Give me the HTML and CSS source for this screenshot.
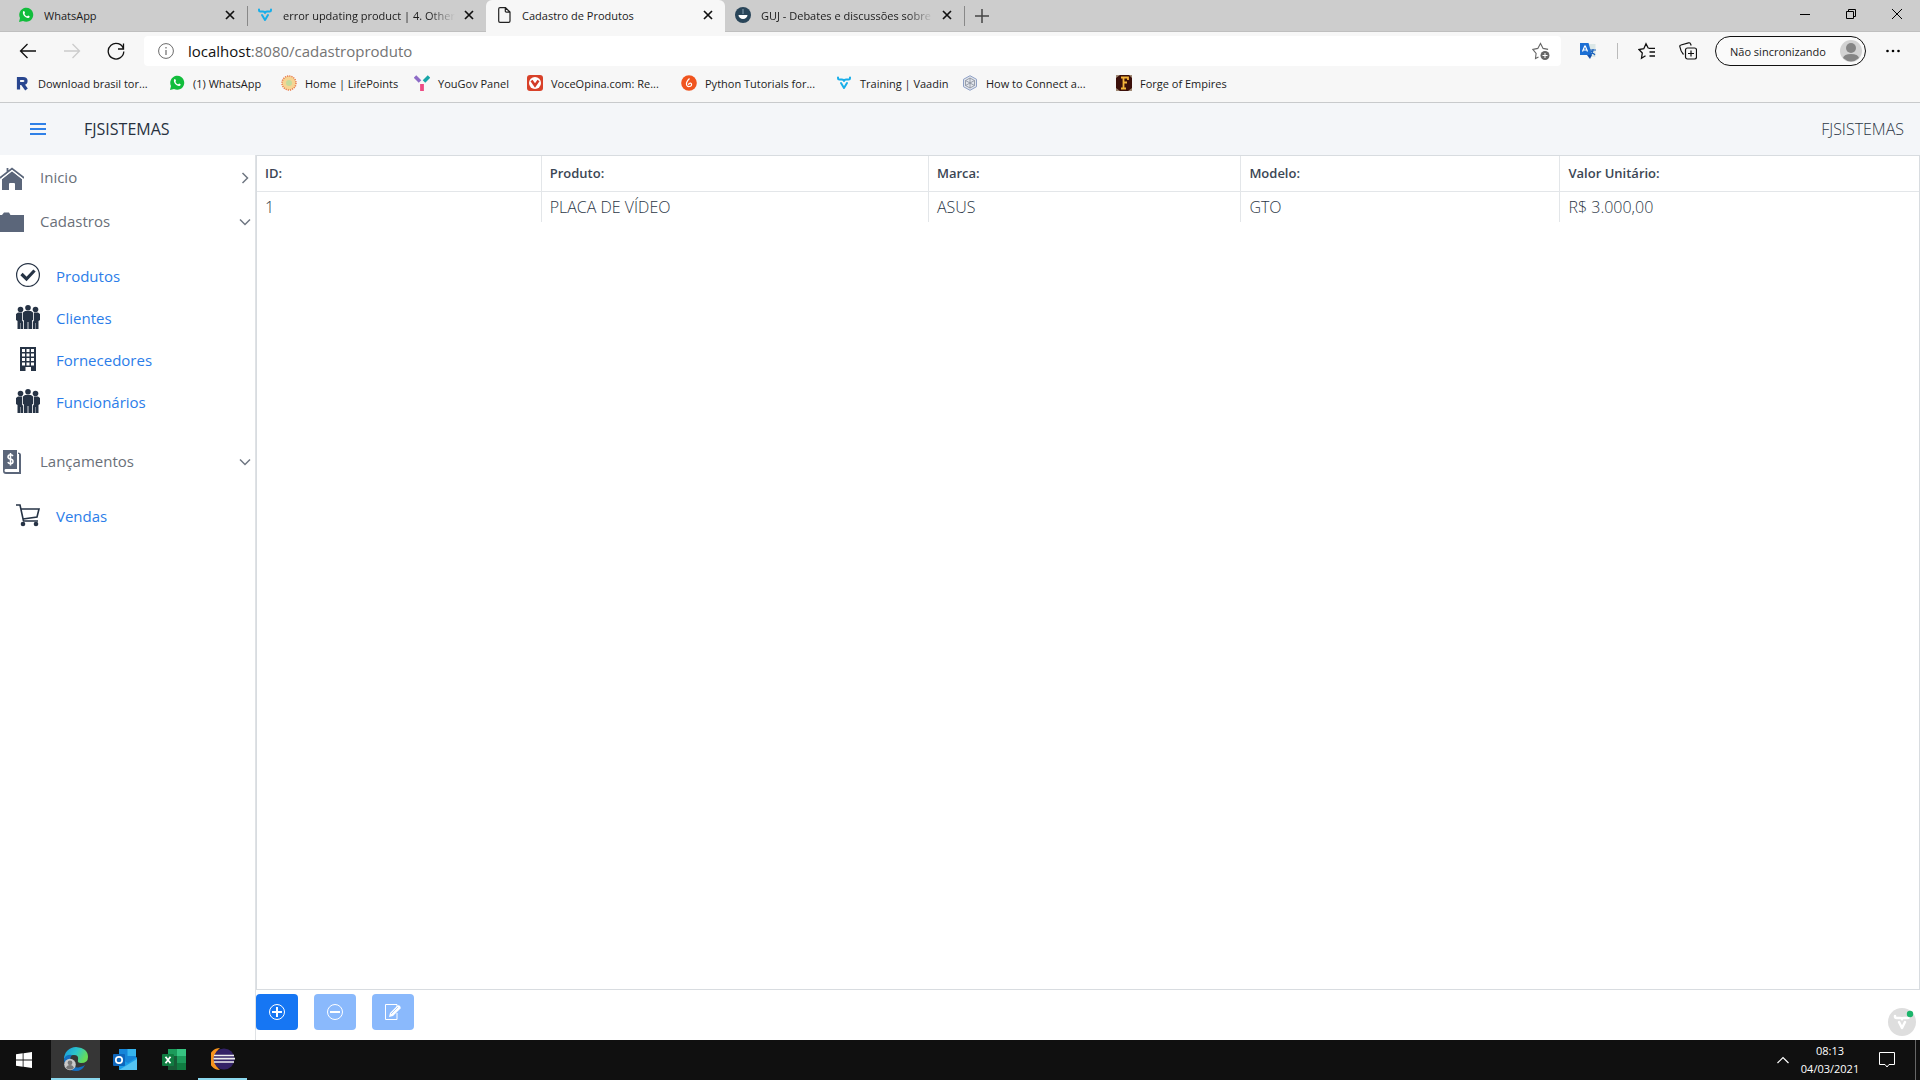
FILE: index.html
```html
<!DOCTYPE html>
<html lang="pt-BR">
<head>
<meta charset="utf-8">
<title>Cadastro de Produtos</title>
<link rel="stylesheet" href="styles.css">
</head>
<body>
<svg class="defs" aria-hidden="true">
  <symbol id="close" viewBox="0 0 16 16"><path d="M4 4l8 8M12 4l-8 8" stroke="#111" stroke-width="1.7" fill="none"/></symbol>
  <symbol id="whatsapp" viewBox="0 0 16 16"><path d="M1 15l1-4A7 7 0 1 1 5 14z" fill="#12bd3c"/><path d="M5.3 4.3c.6-.4 1-.2 1.200.3l.5 1.200c.1.4-.5.8-.5 1.100.5 1 1.400 1.900 2.500 2.400.4 0 .8-.9 1.200-.8l1.300.7c.4.3 0 1.300-.6 1.600-2.600 1.200-7.500-3.300-5.600-6.500z" fill="#fff"/></symbol>
  <symbol id="vaadin" viewBox="0 0 16 16"><path d="M2 2.500v.8q0 1.200 1.300 1.200h2.500q2.200 0 2.200 1.500 0-1.500 2.200-1.500h2.500q1.300 0 1.300-1.200v-.8M5 8l3 5 3-5" fill="none" stroke="currentColor" stroke-width="2" stroke-linecap="round" stroke-linejoin="round"/></symbol>
  <symbol id="people" viewBox="0 0 24 24"><circle cx="12" cy="2.800" r="2.800"/><circle cx="4.500" cy="4.500" r="2.800"/><circle cx="19.500" cy="4.500" r="2.800"/><path d="M9 6h6l2 1.500V15l-1 .5V24h-3.600v-7h-.8v7H8v-8.500L7 15V7.500zM2 7.500h4.200V16l1 .5V24H4.700v-6h-.4v6H1.500v-8L0 15V9zM22 7.500h-4.200V16l-1 .5V24h2.500v-6h.4v6h2.800v-8l1.500-1V9z"/></symbol>
  <symbol id="chevron" viewBox="0 0 12 12"><path d="M1 3.500l5 5 5-5" fill="none" stroke="#6f7782" stroke-width="1.500"/></symbol>
</svg>

<header class="browser">
  <div class="tabstrip">
    <div class="tab">
      <svg class="i16"><use href="#whatsapp"/></svg>
      <span class="tab-title">WhatsApp</span>
      <button class="bare" aria-label="Fechar"><svg class="i16"><use href="#close"/></svg></button>
    </div>
    <div class="tab divided">
      <svg class="i16 cyan"><use href="#vaadin"/></svg>
      <span class="tab-title fade">error updating product | 4. Other</span>
      <button class="bare" aria-label="Fechar"><svg class="i16"><use href="#close"/></svg></button>
    </div>
    <div class="tab active">
      <svg class="i16" viewBox="0 0 16 16"><path d="M4 .7h5.500L14 5v9q0 1.300-1.300 1.300H4Q2.700 15.300 2.700 14V2Q2.700.7 4 .7zM9.300.7V4q0 1.200 1.200 1.200H14" fill="none" stroke="#222" stroke-width="1.200"/></svg>
      <span class="tab-title">Cadastro de Produtos</span>
      <button class="bare" aria-label="Fechar"><svg class="i16"><use href="#close"/></svg></button>
    </div>
    <div class="tab">
      <svg class="i16" viewBox="0 0 16 16"><circle cx="8" cy="8" r="8" fill="#294559"/><path d="M3.500 8h9a4.500 4 0 0 1-9 0z" fill="#fff"/><path d="M8 2v5" stroke="#577184" stroke-width="2"/></svg>
      <span class="tab-title fade">GUJ - Debates e discussões sobre</span>
      <button class="bare" aria-label="Fechar"><svg class="i16"><use href="#close"/></svg></button>
    </div>
    <button class="bare newtab" aria-label="Nova guia"><svg class="i16" viewBox="0 0 16 16"><path d="M8 1v14M1 8h14" stroke="#444" stroke-width="1.500"/></svg></button>
    <div class="window-controls">
      <button class="bare" aria-label="Minimizar"><svg class="i12" viewBox="0 0 12 12"><path d="M1 6.500h10" stroke="#000"/></svg></button>
      <button class="bare" aria-label="Restaurar"><svg class="i12" viewBox="0 0 12 12"><path d="M1.500 3.500h7v7h-7zM3.500 3.500v-2h7v7h-2" fill="none" stroke="#000"/></svg></button>
      <button class="bare" aria-label="Fechar janela"><svg class="i12" viewBox="0 0 12 12"><path d="M1 1l10 10M11 1L1 11" stroke="#000"/></svg></button>
    </div>
  </div>

  <div class="toolbar">
    <button class="bare nav" aria-label="Voltar"><svg class="i18" viewBox="0 0 18 18"><path d="M17 9H1.500M8.500 2l-7 7 7 7" fill="none" stroke="#111" stroke-width="1.300"/></svg></button>
    <button class="bare nav" aria-label="Avançar" disabled><svg class="i18" viewBox="0 0 18 18"><path d="M1 9h15.500M9.500 2l7 7-7 7" fill="none" stroke="#ccc" stroke-width="1.300"/></svg></button>
    <button class="bare nav" aria-label="Atualizar"><svg class="i18" viewBox="0 0 18 18"><path d="M16.500 7A7.800 7.800 0 1 0 16.800 9.500M16.500 1.500V7H11" fill="none" stroke="#111" stroke-width="1.300"/></svg></button>
    <div class="address">
      <svg class="i16" viewBox="0 0 16 16"><circle cx="8" cy="8" r="7.400" fill="none" stroke="#6b6b6b"/><path d="M8 7v5M8 4v1.500" stroke="#6b6b6b" stroke-width="1.200"/></svg>
      <span class="url"><b>localhost</b>:8080/cadastroproduto</span>
      <button class="bare" aria-label="Adicionar aos favoritos"><svg class="i18" viewBox="0 0 18 18"><path d="M6.500 15L3.500 16.500l.6-5.200L.8 7.400l5-1L8.500 1.500l2.600 4.900 5 1" fill="none" stroke="#666" stroke-width="1.100"/><circle cx="13" cy="13.500" r="4.500" fill="#666"/><path d="M13 11v5M10.500 13.500h5" stroke="#fff"/></svg></button>
    </div>
    <div class="tools">
      <button class="bare" aria-label="Traduzir"><svg class="i18" viewBox="0 0 18 18"><path d="M10 2h6.500v13H11z" fill="#dbe7e7"/><path d="M1 1h8.500l3.500 12H1z" fill="#1c6fd4"/><path d="M8 13h5l-2 4z" fill="#1750a8"/><path d="M3.500 9.500L5.700 4h.6l2.200 5.500M4.500 8h3" stroke="#fff" stroke-width="1.200" fill="none"/><path d="M11 8h6M14 7v1q0 3-3 5M12 9l4 4" stroke="#1d62bd" stroke-width="1.200" fill="none"/></svg></button>
      <span class="rule"></span>
      <button class="bare" aria-label="Favoritos"><svg class="i18" viewBox="0 0 18 18"><path d="M10.500 6.300h6.500M11.500 10h5.500M11.500 14H17M7.500 13.700l-4 2.500.8-5.200L1 7.500l4.800-.8L8 1.800l2.300 4.500" fill="none" stroke="#111" stroke-width="1.300"/></svg></button>
      <button class="bare" aria-label="Coleções"><svg class="i18" viewBox="0 0 18 18"><rect x="6.500" y="6" width="11" height="11" rx="2" fill="none" stroke="#111" stroke-width="1.200"/><path d="M12 8.500v6M9 11.500h6M4.500 12.500Q1.500 9 .8 4.500 .6 3.300 2 3l7.500-2.200q1.500-.3 2 1l.7 1.700" fill="none" stroke="#111" stroke-width="1.200"/></svg></button>
    </div>
    <button class="profile">Não sincronizando
      <svg class="avatar" viewBox="0 0 22 22"><circle cx="11" cy="11" r="11" fill="#d2d2d2"/><circle cx="11" cy="8" r="5" fill="#858585"/><path d="M3 18q1-4 8-4t8 4q-8 7-16 0z" fill="#858585"/></svg>
    </button>
    <button class="bare more" aria-label="Mais"><svg class="i16" viewBox="0 0 16 16"><circle cx="2.500" cy="8" r="1.300"/><circle cx="8" cy="8" r="1.300"/><circle cx="13.500" cy="8" r="1.300"/></svg></button>
  </div>

  <nav class="bookmarks">
    <a href="#"><svg class="i16" viewBox="0 0 16 16"><path d="M4.500 14.500V3.500H9q3 0 3 2.500T9 8.500H5M8.500 9l4 5.500" fill="none" stroke="#29468f" stroke-width="3.200"/></svg>Download brasil tor...</a>
    <a href="#"><svg class="i16"><use href="#whatsapp"/></svg>(1) WhatsApp</a>
    <a href="#"><svg class="i16" viewBox="0 0 16 16"><circle cx="8" cy="8" r="7" fill="#f6d493" stroke="#e97849" stroke-width="1.500" stroke-dasharray="1.200 1"/><circle cx="8" cy="8" r="3" fill="#c4db9d"/></svg>Home | LifePoints</a>
    <a href="#"><svg class="i16" viewBox="0 0 16 16"><path d="M1 1.500l5 5" stroke="#8d6bc6" stroke-width="3.500"/><path d="M15 1.500l-5 5" stroke="#17a5a7" stroke-width="3.500"/><path d="M8 9v7" stroke="#ed4b83" stroke-width="3.800"/></svg>YouGov Panel</a>
    <a href="#"><svg class="i16" viewBox="0 0 16 16"><rect width="16" height="16" rx="3" fill="#d84129"/><circle cx="8" cy="8" r="6" fill="#fff"/><path d="M4.500 5.500L8 10.500l3.500-5" fill="none" stroke="#d33a27" stroke-width="2.500"/></svg>VoceOpina.com: Re...</a>
    <a href="#"><svg class="i16" viewBox="0 0 16 16"><circle cx="8" cy="8" r="7.800" fill="#f0541e"/><path d="M8.500 3.500Q5 7 5.500 9.500 6 12 8.500 11.500 11 11 10.500 9q-.7-1.500-2.300-.6Q7.200 9.500 8.200 9.800" fill="none" stroke="#fff" stroke-width="1.200"/></svg>Python Tutorials for...</a>
    <a href="#"><svg class="i16 cyan"><use href="#vaadin"/></svg>Training | Vaadin</a>
    <a href="#"><svg class="i16" viewBox="0 0 16 16"><path d="M8 .7l6.500 3.600v7.400L8 15.300l-6.500-3.600V4.300z" fill="#e3e6ec" stroke="#8d9fc5"/><path d="M8 3l4.500 2.500v5L8 13l-4.500-2.500v-5zM8 3v10M3.500 5.500l9 5M12.500 5.500l-9 5" fill="none" stroke="#858d9c" stroke-width=".8"/></svg>How to Connect a...</a>
    <a href="#"><svg class="i16" viewBox="0 0 16 16"><rect width="16" height="16" fill="#3c100b"/><path d="M0 0h4L0 3zM16 0v3l-3-3zM0 16v-3l4 3zM16 16v-3l-4 3z" fill="#a08a76"/><path d="M5 2.500h7V5M7.500 2.500v11M5 13.500h5M7.500 7.500h3.500" fill="none" stroke="#f5b53a" stroke-width="1.800"/></svg>Forge of Empires</a>
  </nav>
</header>

<div class="app">
  <header class="navbar">
    <button class="bare menu" aria-label="Menu"><svg class="i16" viewBox="0 0 16 16"><path d="M0 3h16M0 8h16M0 13h16" stroke="#2f80e7" stroke-width="2"/></svg></button>
    <h1>FJSISTEMAS</h1>
    <span class="company">FJSISTEMAS</span>
  </header>
  <div class="content">
    <aside class="drawer">
      <details>
        <summary><svg class="i24" viewBox="0 0 24 24"><path d="M12 5L22 13v11h-7v-6q0-1-1-1h-4q-1 0-1 1v6H2V13z"/><path d="M0 11.500L12 2.200l12 9.300M7.500 1.500V6" transform="translate(0 .5)" fill="none" stroke="currentColor" stroke-width="1.800"/><path d="M1.500 12.700L12 4.600l10.500 8.100" fill="none" stroke="#fff" stroke-width="1.200"/></svg>Inicio<svg class="i12 arrow"><use href="#chevron"/></svg></summary>
      </details>
      <details open>
        <summary><svg class="i24" viewBox="0 0 24 24"><path d="M0 5h2l2-2.500h5L10.500 5H24v17H0z"/></svg>Cadastros<svg class="i12 arrow"><use href="#chevron"/></svg></summary>
        <ul>
          <li><a href="#"><svg class="i24" viewBox="0 0 24 24"><circle cx="12" cy="12" r="11.400" fill="none" stroke="currentColor" stroke-width="1.200"/><path d="M5.500 11l5 5 8-8.500" fill="none" stroke="currentColor" stroke-width="3.200"/></svg>Produtos</a></li>
          <li><a href="#"><svg class="i24"><use href="#people"/></svg>Clientes</a></li>
          <li><a href="#"><svg class="i24" viewBox="0 0 24 24"><path fill-rule="evenodd" d="M4 0h16v24h-5v-4H9.500v4H4zM6 2v3h3V2zm4.500 0v3h3V2zM15 2v3h3V2zM6 6.500v3h3v-3zm4.500 0v3h3v-3zm4.500 0v3h3v-3zM6 11v3h3v-3zm4.500 0v3h3v-3zm4.500 0v3h3v-3zM6 15.500v3h3v-3zm4.500 0v3h3v-3zm4.500 0v3h3v-3z"/></svg>Fornecedores</a></li>
          <li><a href="#"><svg class="i24"><use href="#people"/></svg>Funcionários</a></li>
        </ul>
      </details>
      <details open>
        <summary><svg class="i24" viewBox="0 0 24 24"><path d="M3 0h14v19H5.500q-1 0-1 1.500T6 22h13V4h-1V2.500q3 0 3 2.500v19H6q-3 0-3-3z"/><path d="M13 6Q12 4.800 10.500 4.800 8 4.800 8 7q0 1.600 2.500 2T13 11.500q0 2.200-2.500 2.200Q9 13.700 7.700 12.300M10.500 3v12.500" fill="none" stroke="#fff" stroke-width="1.500"/></svg>Lançamentos<svg class="i12 arrow"><use href="#chevron"/></svg></summary>
        <ul>
          <li><a href="#"><svg class="i24" viewBox="0 0 24 24"><path d="M0 2h4l3.500 16M5 6h18l-2 8-14 2M7 18h15" fill="none" stroke="currentColor" stroke-width="1.600"/><circle cx="7" cy="21" r="2.300"/><circle cx="20" cy="21" r="2.300"/></svg>Vendas</a></li>
        </ul>
      </details>
    </aside>
    <main>
      <div class="grid">
        <table>
          <colgroup><col class="c-id"><col class="c-product"><col class="c-brand"><col class="c-model"><col></colgroup>
          <thead><tr><th>ID:</th><th>Produto:</th><th>Marca:</th><th>Modelo:</th><th>Valor Unitário:</th></tr></thead>
          <tbody><tr><td>1</td><td>PLACA DE VÍDEO</td><td>ASUS</td><td>GTO</td><td>R$ 3.000,00</td></tr></tbody>
        </table>
      </div>
      <div class="actions">
        <button class="primary" aria-label="Adicionar"><svg class="i16" viewBox="0 0 16 16"><circle cx="8" cy="8" r="7.500" fill="none" stroke="#fff"/><path d="M8 3v10M3 8h10" stroke="#fff" stroke-width="2"/></svg></button>
        <button class="primary" aria-label="Remover" disabled><svg class="i16" viewBox="0 0 16 16"><circle cx="8" cy="8" r="7.500" fill="none" stroke="#fff"/><path d="M3 8h10" stroke="#fff" stroke-width="2"/></svg></button>
        <button class="primary" aria-label="Editar" disabled><svg class="i16" viewBox="0 0 16 16"><path d="M12 9v6.500H.5V.5H12V3" fill="none" stroke="#fff"/><path d="M4 13l1-4 7.500-7.500Q14 .8 15 2t.5 2.500L8 12z" fill="#fff"/><path d="M6 10l7-7" stroke="#8ab9fc" stroke-width=".7"/></svg></button>
      </div>
    </main>
    <button class="bare devtool" aria-label="Vaadin"><svg class="i28" viewBox="0 0 28 28"><circle cx="14" cy="14" r="14" fill="#dedede"/><path d="M7 8v.5q0 1.500 1.500 1.500H12q2 0 2 1.300 0-1.300 2-1.300h3.500Q21 10 21 8.500V8M11 14l3 6 3-6" fill="none" stroke="#fff" stroke-width="2.500" stroke-linecap="round" stroke-linejoin="round"/><circle cx="22" cy="6" r="3.200" fill="#1cb56b"/></svg></button>
  </div>
</div>

<footer class="taskbar">
  <button class="task start" aria-label="Iniciar"><svg class="i16" viewBox="0 0 16 16"><path d="M0 2.300L6.700 1.300v6.300H0zM7.500 1.200L16 0v7.600H7.500zM0 8.400h6.700v6.300L0 13.800zM7.500 8.400H16V16l-8.500-1.200z" fill="#fff"/></svg></button>
  <button class="task current" aria-label="Edge"><svg class="i24" viewBox="0 0 24 24"><defs><linearGradient id="eg" x1="0" y1="0" x2="1" y2=".4"><stop offset="0" stop-color="#1796de"/><stop offset=".55" stop-color="#2cc5cb"/><stop offset="1" stop-color="#66dc58"/></linearGradient></defs><path d="M0 12A12 12 0 0 1 12 0q12 1 12 10 0 6-7 6-4 0-3-3 1-5-4-5Q3 8 0 12z" fill="url(#eg)"/><path d="M0 12q2-5 8-4-3 3-1 8 3 6 9 4 3-.5 5-2-3 6-9 6A12 12 0 0 1 0 12z" fill="#146fc1"/><circle cx="6" cy="17.500" r="5.800" fill="#c9c9c9"/><circle cx="6" cy="15.800" r="2.400" fill="#777"/><path d="M2 21q1-3 4-3t4 3q-4 3-8 0z" fill="#777"/></svg></button>
  <button class="task" aria-label="Outlook"><svg class="i24" viewBox="0 0 24 24"><path d="M6 1h17v14H6z" fill="#1686d9"/><path d="M14.500 1H23v7h-8.500z" fill="#35b5ef"/><path d="M6 10l9 5 9-6v13H6z" fill="#1b9de8"/><path d="M6 22l18-11v11z" fill="#54c3f2"/><rect y="6" width="12" height="12" rx="1" fill="#0e66bb"/><circle cx="6" cy="12" r="3.200" fill="none" stroke="#fff" stroke-width="1.700"/></svg></button>
  <button class="task" aria-label="Excel"><svg class="i24" viewBox="0 0 24 24"><path d="M6 1h18v21H6z" fill="#1c9b5b"/><path d="M15 1h9v7h-9z" fill="#36c481"/><path d="M6 8h9v7H6zM6 15h18v7H6z" fill="#185c37"/><path d="M15 15h9v7h-9z" fill="#107c41"/><rect y="6" width="12" height="12" rx="1" fill="#107c41"/><path d="M3.500 8.700l5 6.600M8.500 8.700l-5 6.600" stroke="#fff" stroke-width="1.800"/></svg></button>
  <button class="task running" aria-label="Eclipse"><svg class="i24" viewBox="0 0 24 24"><path d="M9 1a11 11 0 0 0 0 22A14 14 0 0 1 9 1z" fill="#f7941e"/><circle cx="13" cy="12" r="10.500" fill="#332266"/><path d="M3 8.500h20M2.500 11.700h21.500M3 15h20" stroke="#eee" stroke-width="1.700"/></svg></button>
  <div class="tray">
    <button class="bare" aria-label="Ícones ocultos"><svg class="i12" viewBox="0 0 12 12"><path d="M.5 9L6 3.500 11.500 9" fill="none" stroke="#fff" stroke-width="1.200"/></svg></button>
    <time class="clock"><span>08:13</span><span>04/03/2021</span></time>
    <button class="bare" aria-label="Notificações"><svg class="i16" viewBox="0 0 16 16"><path d="M.5 .5h15v12H10l-2 2.500-2-2.500H.5z" fill="none" stroke="#fff"/></svg></button>
  </div>
</footer>
</body>
</html>
```
FILE: styles.css
```css
* { box-sizing: border-box; }
body {
  margin: 0;
  min-height: 100vh;
  display: flex;
  flex-direction: column;
  font-family: "Open Sans", "Noto Sans", sans-serif;
  font-size: 15px;
  color: #2c3746;
  background: #fff;
}
svg { flex: none; display: block; }
.defs { position: absolute; width: 0; height: 0; }
.i12 { width: 12px; height: 12px; }
.i16 { width: 16px; height: 16px; }
.i18 { width: 18px; height: 18px; }
.i24 { width: 24px; height: 24px; fill: currentColor; }
.i28 { width: 28px; height: 28px; }
.cyan { color: #18aee9; }
button { font: inherit; color: inherit; }
a { color: inherit; text-decoration: none; }
.bare { border: 0; padding: 0; background: none; display: flex; align-items: center; justify-content: center; }

/* Browser chrome */
.browser { background: #f7f7f7; border-bottom: 1px solid #c8cacc; font-size: 11px; color: #1b1b1b; }
.tabstrip { display: flex; height: 32px; padding-left: 8px; background: #cdcdcd; border-bottom: 1px solid #bfbfbf; }
.tab { display: flex; align-items: center; gap: 10px; flex: 0 1 239px; min-width: 0; height: 32px; padding: 0 9px 2px 10px; }
.tab.divided { background: linear-gradient(#888, #888) 0 6px / 1px 20px no-repeat; }
.tab.active { background: #f7f7f7; border-radius: 6px 6px 0 0; }
.tab-title { flex: 1; min-width: 0; overflow: hidden; white-space: nowrap; }
.tab .bare { margin-left: -4px; }
.fade { mask-image: linear-gradient(to right, #000 85%, transparent); }
.newtab { width: 36px; background: linear-gradient(#888, #888) 0 6px / 1px 20px no-repeat; }
.window-controls { display: flex; margin-left: auto; height: 28px; }
.window-controls .bare { width: 46px; }
.toolbar { display: flex; align-items: center; height: 38px; }
.nav { width: 44px; margin-left: 6px; }
.nav + .nav { margin-left: 0; }
.address { flex: 1; display: flex; align-items: center; gap: 14px; height: 30px; margin-left: 6px; padding: 0 11px 0 14px; background: #fff; border-radius: 4px; }
.url { flex: 1; font-size: 15px; color: #747474; }
.url b { font-weight: 400; color: #111; }
.tools { display: flex; align-items: center; gap: 17px; margin: 0 15px; }
.tools .bare { width: 24px; }
.rule { width: 1px; height: 16px; background: #bbb; }
.profile { display: flex; align-items: center; justify-content: space-between; width: 151px; height: 30px; padding: 0 3px 0 14px; border: 1px solid #111; border-radius: 15px; background: #fafafa; white-space: nowrap; }
.avatar { width: 22px; height: 22px; }
.more { width: 54px; }
.bookmarks { display: grid; grid-template-columns: 155px 112px 133px 113px 154px 155px 126px 154px auto; justify-content: start; align-items: center; height: 32px; padding: 0 0 6px 14px; }
.bookmarks a { display: flex; align-items: center; gap: 8px; white-space: nowrap; }

/* Application */
.app { flex: 1; display: flex; flex-direction: column; }
.navbar { display: flex; align-items: center; height: 52px; padding: 0 16px 0 30px; background: #f4f6f9; }
.menu { width: 16px; height: 36px; }
.navbar h1 { margin: 0 auto 0 38px; font-size: 16px; font-weight: 400; color: #27313f; }
.company { font-size: 16px; font-weight: 300; }
.content { position: relative; flex: 1; display: flex; }
.drawer { flex: 0 0 256px; border-right: 1px solid #dfe2e5; }
summary { display: flex; align-items: center; gap: 16px; height: 44px; padding-right: 4px; font-weight: 500; color: #6a7079; list-style: none; }
summary svg { margin-top: 2px; }
summary .i24 { color: #5b667a; }
.arrow { margin-left: auto; }
details:not([open]) .arrow { transform: rotate(-90deg); }
.drawer ul { margin: 0; padding: 12px 16px 16px; list-style: none; }
.drawer li a { display: flex; align-items: center; gap: 16px; height: 42px; color: #2b7de9; }
.drawer li svg { margin-bottom: 2px; color: #263345; }
main { flex: 1; min-width: 0; display: flex; flex-direction: column; }
.grid { flex: 1; border: 1px solid #d8dce0; }
table { width: 100%; table-layout: fixed; border-collapse: collapse; }
.c-id { width: 17.1%; }
.c-product { width: 23.3%; }
.c-brand { width: 18.8%; }
.c-model { width: 19.2%; }
th, td { padding: 0 8px; text-align: left; border-right: 1px solid #e3e6e9; }
th:last-child, td:last-child { border-right: 0; }
th { height: 35px; font-size: 13px; font-weight: 600; color: #3b4654; border-bottom: 1px solid #e3e6e9; }
td { height: 31px; font-size: 16px; font-weight: 300; }
.actions { display: flex; gap: 16px; padding: 4px 0 10px; }
.primary { display: flex; align-items: center; justify-content: center; width: 42px; height: 36px; padding: 0; border: 0; border-radius: 4px; background: #1676f3; }
.primary:disabled { background: #8ab9fc; }
.devtool { position: absolute; right: 4px; bottom: 4px; }

/* Windows taskbar */
.taskbar { display: flex; height: 40px; padding-right: 4px; background: #101010; color: #fff; font-size: 12px; }
.task { display: flex; align-items: center; justify-content: center; width: 49px; padding: 0; border: 0; background: none; }
.start { width: 51px; padding-right: 3px; }
.current { background: #363636; border-bottom: 2px solid #8bd8ee; }
.running { border-bottom: 2px solid #8bd8ee; }
.tray { display: flex; align-items: center; gap: 6px; margin-left: auto; padding-right: 20px; border-right: 1px solid #666; }
.clock { display: flex; flex-direction: column; align-items: center; width: 70px; line-height: 18px; font-size: 11px; }
.tray .i16 { margin-left: 8px; }
```
